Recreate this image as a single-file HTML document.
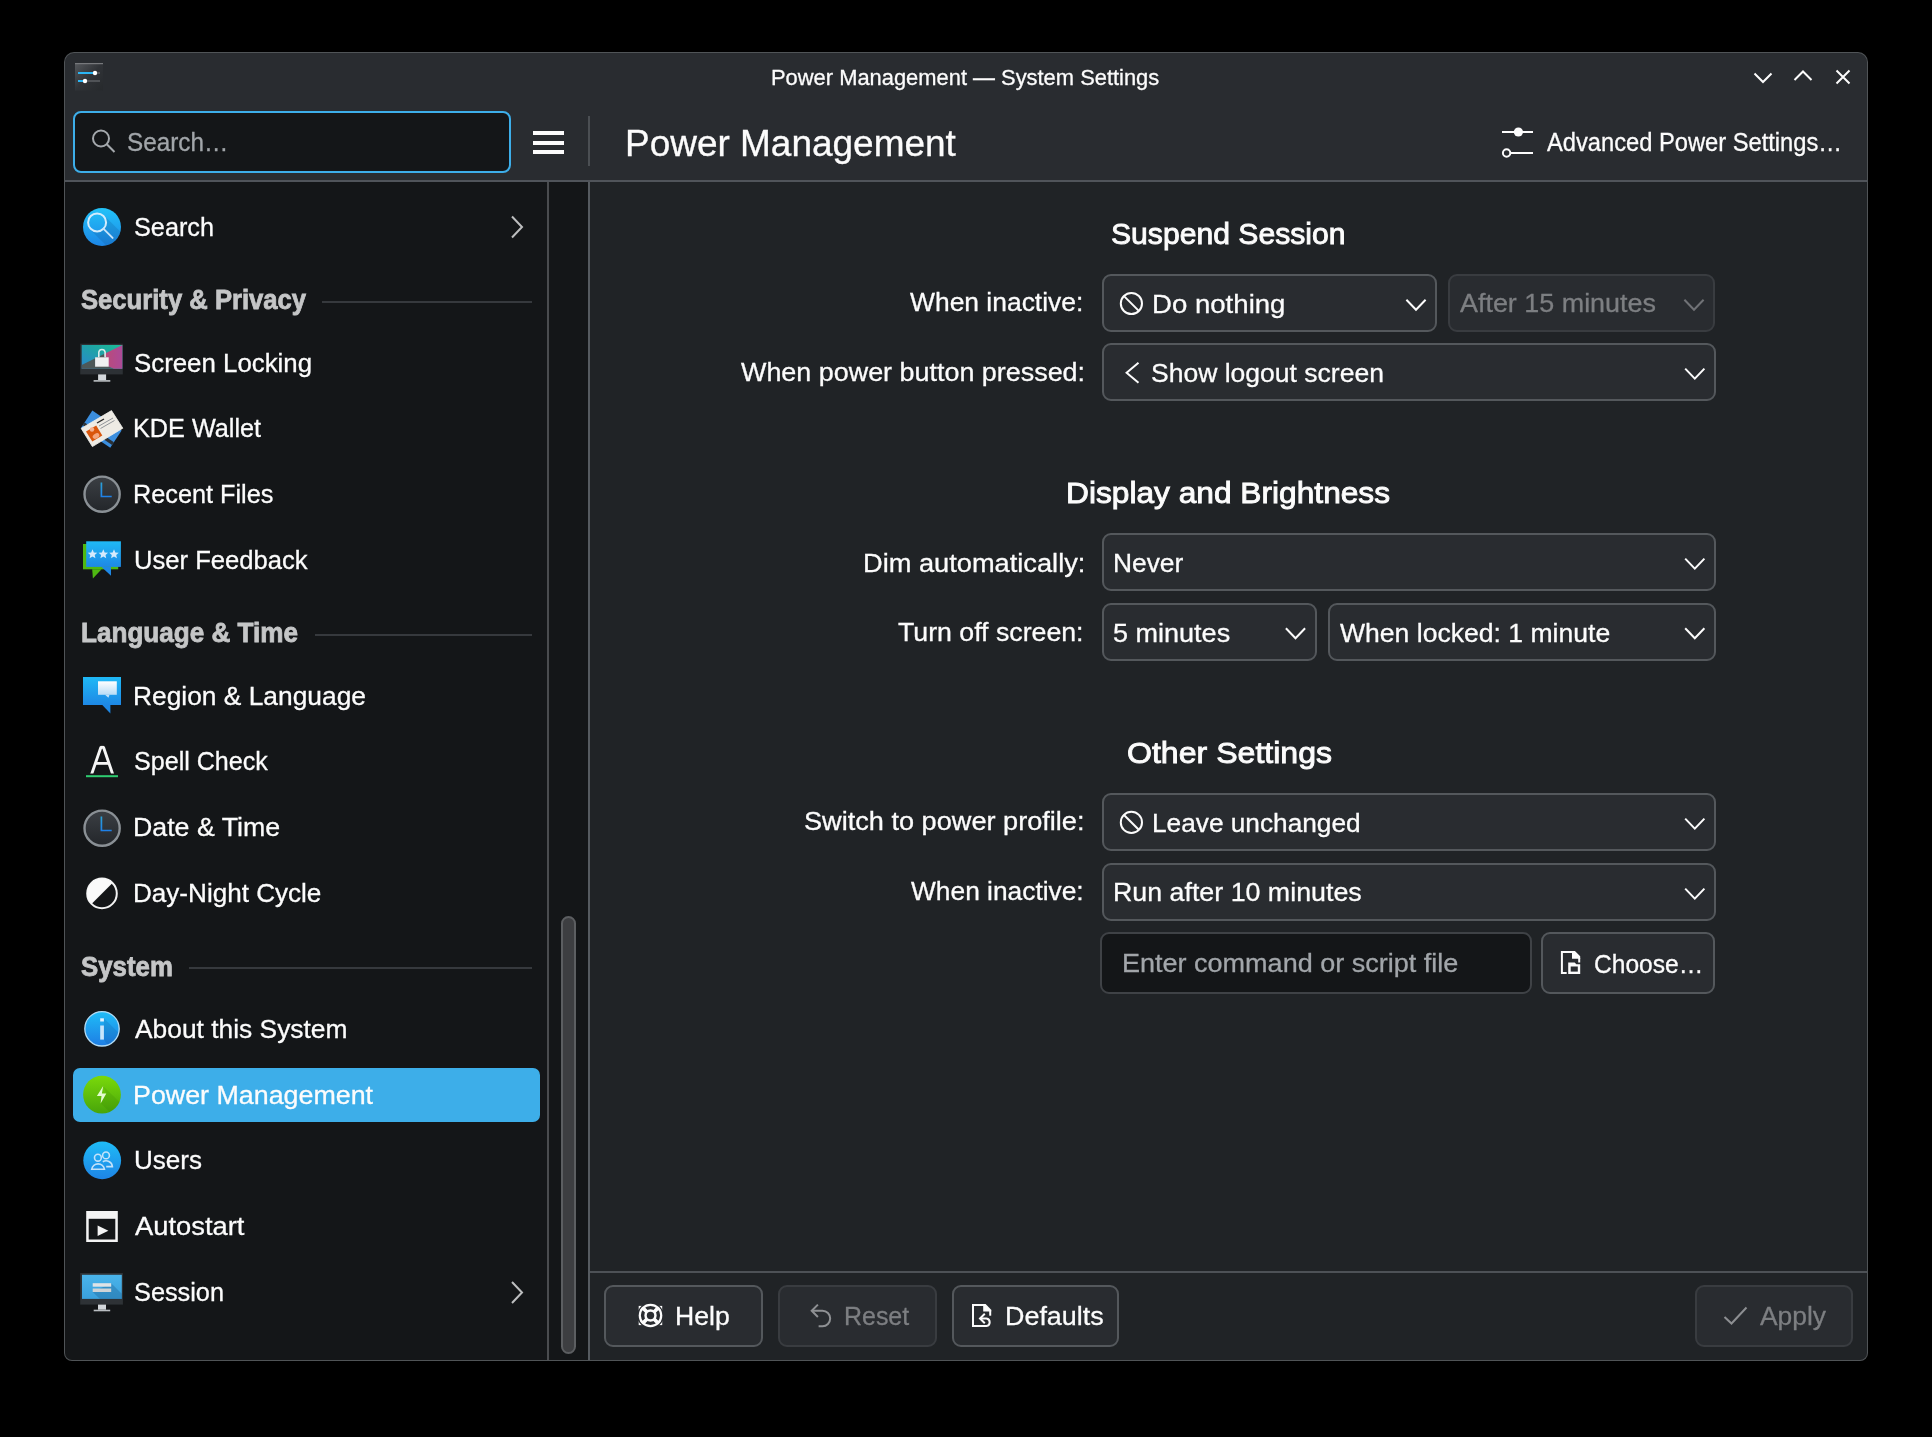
<!DOCTYPE html>
<html><head><meta charset="utf-8"><style>
html,body{margin:0;padding:0;background:#000;width:1932px;height:1437px;overflow:hidden}
body{position:relative;font-family:"Liberation Sans",sans-serif}
body>div,body>svg,body>span{position:absolute}
span{line-height:1;white-space:pre;transform-origin:0 0}
#win{left:64px;top:52px;width:1804px;height:1309px;background:#505457;border-radius:10px 10px 8px 8px}
</style></head><body>
<div id="win"></div>
<div style="left:65px;top:53px;width:1802px;height:127px;background:#292c30;border-radius:9px 9px 0 0"></div>
<div style="left:65px;top:180px;width:1802px;height:2px;background:#50545a;"></div>
<div style="left:65px;top:182px;width:482px;height:1178px;background:#141618;border-bottom-left-radius:7px"></div>
<div style="left:547px;top:182px;width:2px;height:1178px;background:#4a4c4f;"></div>
<div style="left:549px;top:182px;width:39px;height:1178px;background:#141618;"></div>
<div style="left:588px;top:182px;width:2px;height:1178px;background:#565b60;"></div>
<div style="left:590px;top:182px;width:1277px;height:1178px;background:#202326;border-bottom-right-radius:7px"></div>
<div style="left:588px;top:116px;width:2px;height:50px;background:#4b4f53;"></div>
<div style="left:590px;top:1271px;width:1277px;height:2px;background:#4d5156;"></div>
<svg style="left:74px;top:62px" width="30" height="30" viewBox="74 62 30 30">
<defs><linearGradient id="ag" x1="0" y1="0" x2="1" y2="1"><stop offset="0" stop-color="#56595d"/><stop offset="0.5" stop-color="#303337"/><stop offset="1" stop-color="#26292c"/></linearGradient></defs>
<rect x="75" y="63" width="28" height="27.5" fill="url(#ag)"/>
<rect x="75" y="63" width="28" height="1.2" fill="#77797c"/>
<rect x="78" y="72" width="22" height="2" fill="#505357"/>
<rect x="78" y="72" width="16" height="2" fill="#2bb5f3"/>
<circle cx="95" cy="73" r="2.2" fill="#fff"/>
<rect x="78" y="80" width="22" height="2" fill="#505357"/>
<rect x="78" y="80" width="7" height="2" fill="#2bb5f3"/>
<circle cx="85" cy="81" r="2.2" fill="#fff"/>
</svg>
<svg style="left:1748px;top:62px" width="110" height="30" viewBox="1748 62 110 30">
<polyline points="1754.5,73.5 1763,82 1771.5,73.5" fill="none" stroke="#fcfcfc" stroke-width="2"/>
<polyline points="1794.5,80 1803,71.5 1811.5,80" fill="none" stroke="#fcfcfc" stroke-width="2"/>
<path d="M1836.5 70.5 L1849.5 83.5 M1849.5 70.5 L1836.5 83.5" fill="none" stroke="#fcfcfc" stroke-width="2"/>
</svg>
<div style="left:73px;top:111px;width:438px;height:62px;background:#141618;border:2px solid #3daee9;border-radius:8px;box-sizing:border-box;"></div>
<svg style="left:88px;top:126px" width="32" height="32" viewBox="88 126 32 32">
<circle cx="101" cy="138.5" r="8" fill="none" stroke="#a4a8ac" stroke-width="2"/>
<line x1="106.8" y1="144.3" x2="114.5" y2="152" stroke="#a4a8ac" stroke-width="2"/>
</svg>
<div style="left:533px;top:131px;width:31px;height:4px;background:#fcfcfc;"></div>
<div style="left:533px;top:140.5px;width:31px;height:4.0px;background:#fcfcfc;"></div>
<div style="left:533px;top:150px;width:31px;height:4px;background:#fcfcfc;"></div>
<svg style="left:1498px;top:124px" width="40" height="36" viewBox="1498 124 40 36">
<line x1="1502" y1="132" x2="1533" y2="132" stroke="#fcfcfc" stroke-width="2"/>
<circle cx="1518.4" cy="132" r="4.6" fill="#fcfcfc"/>
<line x1="1511" y1="153" x2="1533" y2="153" stroke="#fcfcfc" stroke-width="2"/>
<circle cx="1506.6" cy="153" r="3.7" fill="none" stroke="#fcfcfc" stroke-width="2"/>
</svg>
<div style="left:322px;top:301px;width:210px;height:2px;background:#36393d;"></div>
<div style="left:315px;top:634px;width:217px;height:2px;background:#36393d;"></div>
<div style="left:189px;top:967px;width:343px;height:2px;background:#36393d;"></div>
<svg style="left:505px;top:211px" width="26" height="32" viewBox="505 211 26 32"><polyline points="512,216.5 522,227 512,237.5" fill="none" stroke="#bdbebf" stroke-width="2"/></svg>
<svg style="left:505px;top:1276px" width="26" height="32" viewBox="505 1276 26 32"><polyline points="512,1282.0 522,1292.5 512,1303.0" fill="none" stroke="#bdbebf" stroke-width="2"/></svg>
<div style="left:73px;top:1068px;width:467px;height:54px;background:#3daee9;border-radius:7px"></div>
<div style="left:561px;top:916px;width:15px;height:438px;background:#3d3e41;border:2px solid #5c5e61;border-radius:7.5px;box-sizing:border-box;"></div>
<svg style="left:80px;top:205px" width="44" height="44" viewBox="80 205 44 44">
<defs><linearGradient id="sg" x1="0" y1="0" x2="0" y2="1"><stop offset="0" stop-color="#22c3f8"/><stop offset="1" stop-color="#1d86e6"/></linearGradient></defs>
<circle cx="102" cy="227" r="19" fill="url(#sg)"/>
<clipPath id="sclip"><circle cx="102" cy="227" r="19"/></clipPath>
<mask id="smask"><rect x="78" y="203" width="48" height="48" fill="#fff"/><circle cx="97.1" cy="222.4" r="9" fill="#000"/></mask>
<g clip-path="url(#sclip)"><polygon mask="url(#smask)" points="104.1,215.4 134.1,245.4 120.1,259.4 90.1,229.4" fill="#0a3a70" opacity="0.16"/></g>
<circle cx="97.1" cy="222.4" r="9" fill="none" stroke="#d4ecfc" stroke-width="2"/>
<line x1="103.6" y1="228.9" x2="112.6" y2="237.9" stroke="#c8e4fa" stroke-width="1.9" stroke-linecap="round"/>
</svg>
<svg style="left:78px;top:342px" width="48" height="42" viewBox="78 342 48 42">
<defs><linearGradient id="lg1" x1="0" y1="1" x2="1" y2="0"><stop offset="0" stop-color="#2a86d0"/><stop offset="0.6" stop-color="#1ea5a4"/><stop offset="1" stop-color="#1bbf95"/></linearGradient>
<linearGradient id="lg2" x1="0" y1="0" x2="1" y2="0"><stop offset="0" stop-color="#bb4a77"/><stop offset="1" stop-color="#ac4a98"/></linearGradient></defs>
<rect x="80.2" y="343.7" width="42.6" height="30.7" fill="#2d3135"/>
<rect x="81.7" y="345" width="40.6" height="23.8" fill="url(#lg1)"/>
<polygon points="81.7,365.1 104,354 108.7,366.5 113.9,368.8 81.7,368.8" fill="#4d5859"/>
<polygon points="122.3,345 104,354 108.7,366.5 113.9,368.8 122.3,368.8" fill="url(#lg2)"/>
<rect x="98.1" y="374.4" width="8" height="5.7" fill="#d3d7db"/>
<rect x="93.6" y="380.1" width="16.7" height="1.6" fill="#bcc0c4"/>
<path d="M98.8 357.3 V352.2 A3.2 3.3 0 0 1 105.1 352.2 V357.3" fill="none" stroke="#d9eceb" stroke-width="1.6"/>
<rect x="95.1" y="357.3" width="13.6" height="9.4" fill="#eff0f1"/>
</svg>
<svg style="left:78px;top:406px" width="48" height="44" viewBox="78 406 48 44">
<polygon points="92.35,410.6 121.6,430.4 110.25,447.8 81,428" fill="#3b8ede"/>
<polygon points="84.63,422.4 113.9,442.2 112.1,445 82.8,425.2" fill="#2b3035"/>
<polygon points="81.2,428.4 111.5,410.6 122.8,428.2 92.4,446.6" fill="#eeebe4" stroke="#f4f2ee" stroke-width="0.8" stroke-linejoin="round"/>
<polygon points="86,431.5 96.2,425.4 102.3,435.5 92.3,441.5" fill="#d9560c"/>
<circle cx="92" cy="429.5" r="2.2" fill="#f4b08e"/>
<ellipse cx="96" cy="436" rx="3.6" ry="2.4" transform="rotate(-31 96 436)" fill="#f4a67e"/>
<line x1="97" y1="423" x2="104" y2="419" stroke="#2a2a2a" stroke-width="1.4"/>
<line x1="99" y1="426" x2="113" y2="418" stroke="#7a7f85" stroke-width="0.8"/>
<line x1="100.5" y1="428.5" x2="114.5" y2="420.5" stroke="#7a7f85" stroke-width="0.8"/>
</svg>
<svg style="left:80px;top:472px" width="44" height="44" viewBox="80 472 44 44">
<defs><linearGradient id="cg494" x1="0" y1="0" x2="0" y2="1"><stop offset="0" stop-color="#3b3f44"/><stop offset="1" stop-color="#23262a"/></linearGradient></defs>
<circle cx="102.1" cy="494.2" r="17.6" fill="url(#cg494)" stroke="#8a9095" stroke-width="2.4"/>
<defs><linearGradient id="hg494" gradientUnits="userSpaceOnUse" x1="0" y1="482.2" x2="0" y2="497.2"><stop offset="0" stop-color="#2ca3d6"/><stop offset="1" stop-color="#1e7fe8"/></linearGradient></defs>
<polyline points="101.4,482.59999999999997 101.4,496.5 111.7,496.5" fill="none" stroke="url(#hg494)" stroke-width="1.7"/>
</svg>
<svg style="left:80px;top:806px" width="44" height="44" viewBox="80 806 44 44">
<defs><linearGradient id="cg828" x1="0" y1="0" x2="0" y2="1"><stop offset="0" stop-color="#3b3f44"/><stop offset="1" stop-color="#23262a"/></linearGradient></defs>
<circle cx="102.1" cy="828.2" r="17.6" fill="url(#cg828)" stroke="#8a9095" stroke-width="2.4"/>
<defs><linearGradient id="hg828" gradientUnits="userSpaceOnUse" x1="0" y1="816.2" x2="0" y2="831.2"><stop offset="0" stop-color="#2ca3d6"/><stop offset="1" stop-color="#1e7fe8"/></linearGradient></defs>
<polyline points="101.4,816.6 101.4,830.5 111.7,830.5" fill="none" stroke="url(#hg828)" stroke-width="1.7"/>
</svg>
<svg style="left:80px;top:538px" width="46" height="44" viewBox="80 538 46 44">
<defs><linearGradient id="fg" x1="0" y1="0" x2="0" y2="1"><stop offset="0" stop-color="#1fb9f6"/><stop offset="1" stop-color="#1e88e5"/></linearGradient></defs>
<rect x="83" y="544" width="35.2" height="25.3" fill="#4fb812"/>
<polygon points="92.2,569.3 92.9,578.4 101.6,569.3" fill="#4fb812"/>
<rect x="86.2" y="541.3" width="34.7" height="25.6" fill="url(#fg)"/>
<polygon points="101.6,566.9 111,575.7 111,566.9" fill="#1e88e5"/>
<g fill="#d6eafc"><polygon points="92.50,549.30 93.85,552.44 97.26,552.75 94.69,555.01 95.44,558.35 92.50,556.60 89.56,558.35 90.31,555.01 87.74,552.75 91.15,552.44"/><polygon points="103.30,549.30 104.65,552.44 108.06,552.75 105.49,555.01 106.24,558.35 103.30,556.60 100.36,558.35 101.11,555.01 98.54,552.75 101.95,552.44"/><polygon points="114.00,549.30 115.35,552.44 118.76,552.75 116.19,555.01 116.94,558.35 114.00,556.60 111.06,558.35 111.81,555.01 109.24,552.75 112.65,552.44"/></g>
</svg>
<svg style="left:80px;top:674px" width="44" height="42" viewBox="80 674 44 42">
<defs><linearGradient id="rg" x1="0" y1="0" x2="0" y2="1"><stop offset="0" stop-color="#1fb9f6"/><stop offset="1" stop-color="#1e88e5"/></linearGradient>
<linearGradient id="rw" x1="0" y1="0" x2="0" y2="1"><stop offset="0" stop-color="#ffffff"/><stop offset="1" stop-color="#b8dcf6"/></linearGradient></defs>
<rect x="83" y="677" width="38" height="28" fill="url(#rg)"/>
<polygon points="102.3,704.9 110.4,713.6 110.4,704.9" fill="#1e88e5"/>
<rect x="98" y="681.3" width="18.8" height="13.5" fill="url(#rw)"/>
<polygon points="105,694.8 108.4,697.8 109.5,694.8" fill="#c4e2f8"/>
</svg>
<svg style="left:84px;top:742px" width="38" height="38" viewBox="84 742 38 38">
<clipPath id="aclip"><rect x="84" y="745.6" width="36" height="27.8"/></clipPath><polyline clip-path="url(#aclip)" points="91,776 100.9,747.3 103.5,747.3 113.3,776" fill="none" stroke="#f6f6f6" stroke-width="2.9" stroke-linejoin="bevel"/><rect x="95.5" y="762" width="13.4" height="2.8" fill="#f6f6f6"/>
<rect x="86" y="775.2" width="32" height="2" fill="#2ecc71"/>
</svg>
<svg style="left:82px;top:873px" width="42" height="42" viewBox="82 873 42 42">
<circle cx="102" cy="893.4" r="14.8" fill="#141618" stroke="#f2f2f2" stroke-width="2"/>
<path d="M91.5 903.9 A14.8 14.8 0 0 1 112.5 882.9 Z" fill="#fafafa"/>
</svg>
<svg style="left:80px;top:1006px" width="44" height="44" viewBox="80 1006 44 44">
<defs><linearGradient id="ig" x1="0" y1="0" x2="0" y2="1"><stop offset="0" stop-color="#1fbdf7"/><stop offset="1" stop-color="#1e7de4"/></linearGradient></defs>
<circle cx="102" cy="1028.8" r="17.2" fill="url(#ig)" stroke="#b3ddf7" stroke-width="1.3"/>
<clipPath id="iclip"><circle cx="102" cy="1028.8" r="16.5"/></clipPath>
<polygon clip-path="url(#iclip)" points="103.9,1018.3 130,1044 116,1058 103.9,1039.6" fill="#0a3a70" opacity="0.14"/>
<rect x="100.2" y="1018.3" width="3.7" height="3.2" fill="#e2f2ff"/>
<rect x="100.2" y="1025.5" width="3.7" height="14.1" fill="#c9e5fb"/>
</svg>
<svg style="left:80px;top:1072px" width="44" height="44" viewBox="80 1072 44 44">
<defs><linearGradient id="pg" x1="0" y1="0" x2="0" y2="1"><stop offset="0" stop-color="#7ad90b"/><stop offset="1" stop-color="#48a50a"/></linearGradient></defs>
<circle cx="102" cy="1094.7" r="18.9" fill="url(#pg)"/>
<clipPath id="pclip"><circle cx="102" cy="1094.7" r="18.9"/></clipPath>
<polygon clip-path="url(#pclip)" points="103,1086 106.2,1093.4 101,1103.5 125,1127 135,1117" fill="#2a6a00" opacity="0.13"/>
<polygon points="103.2,1086 96.9,1096 101.5,1096 100.6,1103.6 106.3,1093.4 101.9,1093.4" fill="#e3fbd0"/>
</svg>
<svg style="left:80px;top:1138px" width="44" height="44" viewBox="80 1138 44 44">
<defs><linearGradient id="ug" x1="0" y1="0" x2="0" y2="1"><stop offset="0" stop-color="#1fbcf7"/><stop offset="1" stop-color="#1e84e5"/></linearGradient></defs>
<circle cx="102.2" cy="1160.4" r="18.9" fill="url(#ug)"/>
<g fill="none" stroke="#c2e2fa" stroke-width="1.6">
<circle cx="97.9" cy="1157.7" r="3.4"/>
<path d="M91.7 1169.3 A6.5 6.6 0 0 1 104.5 1169.3 Z"/>
<circle cx="106" cy="1155.4" r="3.4"/>
<path d="M102.8 1161.8 A6.3 6.3 0 0 1 112.4 1166.6 H106.2"/>
</g>
</svg>
<svg style="left:84px;top:1208px" width="38" height="38" viewBox="84 1208 38 38">
<rect x="86.2" y="1211" width="31.6" height="31" fill="#f4f4f4"/>
<rect x="88.7" y="1218.8" width="26.6" height="20.7" fill="#141618"/>
<polygon points="97.6,1225.6 108.4,1230.8 97.6,1236" fill="#f4f4f4"/>
</svg>
<svg style="left:78px;top:1271px" width="48" height="42" viewBox="78 1271 48 42">
<defs><linearGradient id="mg" x1="0" y1="0" x2="0" y2="1"><stop offset="0" stop-color="#4ab4ea"/><stop offset="1" stop-color="#3aa0dc"/></linearGradient></defs>
<rect x="80.2" y="1273" width="42.7" height="31.6" fill="#2e3236"/>
<rect x="82" y="1274.8" width="39.8" height="24.1" fill="url(#mg)"/>
<polygon points="111.2,1283.2 121.8,1293.8 121.8,1298.9 100,1298.9 92.7,1292" fill="#1d5f8f" opacity="0.35"/>
<rect x="92.7" y="1283.2" width="18.5" height="3.5" fill="#dfe3e6"/>
<rect x="92.7" y="1288.5" width="18.5" height="3.5" fill="#cfd3d6"/>
<rect x="98" y="1304.6" width="8" height="5.1" fill="#d2d6da"/>
<rect x="93.7" y="1309.7" width="16.5" height="1.6" fill="#b9bdc1"/>
</svg>
<div style="left:1102px;top:274px;width:335px;height:58px;background:#292c30;border:2px solid #54585c;border-radius:9px;box-sizing:border-box;"></div>
<div style="left:1448px;top:274px;width:267px;height:58px;background:#292c30;border:2px solid #393c40;border-radius:9px;box-sizing:border-box;"></div>
<div style="left:1102px;top:343px;width:614px;height:58px;background:#292c30;border:2px solid #54585c;border-radius:9px;box-sizing:border-box;"></div>
<div style="left:1102px;top:533px;width:614px;height:58px;background:#292c30;border:2px solid #54585c;border-radius:9px;box-sizing:border-box;"></div>
<div style="left:1102px;top:603px;width:215px;height:58px;background:#292c30;border:2px solid #54585c;border-radius:9px;box-sizing:border-box;"></div>
<div style="left:1328px;top:603px;width:388px;height:58px;background:#292c30;border:2px solid #54585c;border-radius:9px;box-sizing:border-box;"></div>
<div style="left:1102px;top:793px;width:614px;height:58px;background:#292c30;border:2px solid #54585c;border-radius:9px;box-sizing:border-box;"></div>
<div style="left:1102px;top:863px;width:614px;height:58px;background:#292c30;border:2px solid #54585c;border-radius:9px;box-sizing:border-box;"></div>
<div style="left:1100px;top:932px;width:432px;height:62px;background:#141618;border:2px solid #3f4246;border-radius:9px;box-sizing:border-box;"></div>
<div style="left:1541px;top:932px;width:174px;height:62px;background:#292c30;border:2px solid #54585c;border-radius:9px;box-sizing:border-box;"></div>
<svg style="left:1402px;top:293px" width="28" height="22" viewBox="1402 293 28 22"><polyline points="1406.4,299.8 1416,309.8 1425.6,299.8" fill="none" stroke="#fcfcfc" stroke-width="2"/></svg>
<svg style="left:1680px;top:293px" width="28" height="22" viewBox="1680 293 28 22"><polyline points="1684.4,299.8 1694,309.8 1703.6,299.8" fill="none" stroke="#707276" stroke-width="2"/></svg>
<svg style="left:1680px;top:362px" width="28" height="22" viewBox="1680 362 28 22"><polyline points="1685.2,368.6 1694.8,378.6 1704.3999999999999,368.6" fill="none" stroke="#fcfcfc" stroke-width="2"/></svg>
<svg style="left:1680px;top:552px" width="28" height="22" viewBox="1680 552 28 22"><polyline points="1685.2,558.6 1694.8,568.6 1704.3999999999999,558.6" fill="none" stroke="#fcfcfc" stroke-width="2"/></svg>
<svg style="left:1281px;top:622px" width="28" height="22" viewBox="1281 622 28 22"><polyline points="1285.9,628.2 1295.5,638.2 1305.1,628.2" fill="none" stroke="#fcfcfc" stroke-width="2"/></svg>
<svg style="left:1680px;top:622px" width="28" height="22" viewBox="1680 622 28 22"><polyline points="1685.2,628.2 1694.8,638.2 1704.3999999999999,628.2" fill="none" stroke="#fcfcfc" stroke-width="2"/></svg>
<svg style="left:1680px;top:812px" width="28" height="22" viewBox="1680 812 28 22"><polyline points="1685.2,818.6 1694.8,828.6 1704.3999999999999,818.6" fill="none" stroke="#fcfcfc" stroke-width="2"/></svg>
<svg style="left:1680px;top:882px" width="28" height="22" viewBox="1680 882 28 22"><polyline points="1685.2,888.6 1694.8,898.6 1704.3999999999999,888.6" fill="none" stroke="#fcfcfc" stroke-width="2"/></svg>
<svg style="left:1116px;top:288px" width="32" height="30" viewBox="1116 288 32 30">
<circle cx="1131.4" cy="303.5" r="10.6" fill="none" stroke="#fcfcfc" stroke-width="2"/>
<line x1="1124" y1="296.1" x2="1138.8" y2="310.9" stroke="#fcfcfc" stroke-width="2"/>
</svg>
<svg style="left:1116px;top:807px" width="32" height="30" viewBox="1116 807 32 30">
<circle cx="1131.4" cy="822.4" r="10.6" fill="none" stroke="#fcfcfc" stroke-width="2"/>
<line x1="1124" y1="815.0" x2="1138.8" y2="829.8" stroke="#fcfcfc" stroke-width="2"/>
</svg>
<svg style="left:1118px;top:356px" width="28" height="34" viewBox="1118 356 28 34"><polyline points="1138.5,362.8 1126.6,372.8 1138.5,382.8" fill="none" stroke="#fcfcfc" stroke-width="2"/></svg>
<svg style="left:1556px;top:946px" width="30" height="32" viewBox="1556 946 30 32">
<path d="M1566.7 973 H1561.9 V951.9 H1574.5" fill="none" stroke="#fcfcfc" stroke-width="2"/>
<polygon points="1572,950.9 1574.9,950.9 1580.2,956.3 1580.2,958.7 1572,958.7" fill="#fcfcfc"/>
<rect x="1578.2" y="958" width="2" height="4.5" fill="#fcfcfc"/>
<polygon points="1568.2,962.5 1574.6,962.5 1576.4,964.3 1580.2,964.3 1580.2,974 1568.2,974" fill="#fcfcfc"/>
<rect x="1570.7" y="966.5" width="7.1" height="5.1" fill="#292c30"/>
</svg>
<div style="left:604px;top:1285px;width:159px;height:62px;background:#292c30;border:2px solid #54585c;border-radius:9px;box-sizing:border-box;"></div>
<div style="left:778px;top:1285px;width:159px;height:62px;background:#292c30;border:2px solid #393c40;border-radius:9px;box-sizing:border-box;"></div>
<div style="left:952px;top:1285px;width:167px;height:62px;background:#292c30;border:2px solid #54585c;border-radius:9px;box-sizing:border-box;"></div>
<div style="left:1695px;top:1285px;width:158px;height:62px;background:#292c30;border:2px solid #393c40;border-radius:9px;box-sizing:border-box;"></div>
<svg style="left:634px;top:1299px" width="34" height="34" viewBox="634 1299 34 34">
<rect x="638.7" y="1305.9" width="4.6" height="4.4" fill="#fcfcfc"/>
<rect x="657.6" y="1305.9" width="4.6" height="4.4" fill="#fcfcfc"/>
<rect x="638.7" y="1320.7" width="4.6" height="4.4" fill="#fcfcfc"/>
<rect x="657.6" y="1320.7" width="4.6" height="4.4" fill="#fcfcfc"/>
<circle cx="650.5" cy="1315.5" r="12.5" fill="none" stroke="#292c30" stroke-width="1.4"/>
<circle cx="650.5" cy="1315.5" r="11.8" fill="#fcfcfc"/>
<circle cx="650.5" cy="1315.5" r="7.9" fill="none" stroke="#292c30" stroke-width="3.4"/>
<g stroke="#fcfcfc" stroke-width="3.8">
<line x1="643" y1="1308" x2="658" y2="1323"/>
<line x1="658" y1="1308" x2="643" y2="1323"/>
</g>
<circle cx="650.5" cy="1315.5" r="3.7" fill="#292c30"/>
</svg>
<svg style="left:806px;top:1299px" width="30" height="32" viewBox="806 1299 30 32">
<path d="M812.2 1310.8 H822.5 A7.7 7.7 0 0 1 822.5 1326.2 H818.6" fill="none" stroke="#8f9194" stroke-width="2"/>
<polyline points="817.9,1304.6 811.7,1310.8 817.9,1317" fill="none" stroke="#8f9194" stroke-width="2"/>
</svg>
<svg style="left:966px;top:1299px" width="32" height="32" viewBox="966 1299 32 32">
<path d="M985 1305 H973 V1326 H986.5 A3.8 3.8 0 0 0 986.5 1318.5 H980" fill="none" stroke="#fcfcfc" stroke-width="2"/>
<polygon points="983.2,1304 985.6,1304 991.2,1309.8 991.2,1311.5 983.2,1311.5" fill="#fcfcfc"/>
<rect x="989.2" y="1310" width="2" height="5.7" fill="#fcfcfc"/>
<polyline points="984.8,1313.8 980,1318.5 984.8,1323.2" fill="none" stroke="#fcfcfc" stroke-width="2"/>
</svg>
<svg style="left:1720px;top:1303px" width="32" height="26" viewBox="1720 1303 32 26">
<polyline points="1724.5,1317 1731.5,1323.5 1746.5,1307.5" fill="none" stroke="#8d8f92" stroke-width="2"/>
</svg>
<span style="left:771.46px;top:66.89px;font-size:22.6px;font-weight:400;-webkit-text-stroke:0.3px currentColor;color:#fcfcfc;transform:scaleX(0.9692)">Power Management — System Settings</span>
<span style="left:126.55px;top:128.69px;font-size:26.5px;font-weight:400;-webkit-text-stroke:0.3px currentColor;color:#a2a6aa;transform:scaleX(0.9173)">Search…</span>
<span style="left:624.96px;top:125.69px;font-size:36.6px;font-weight:400;-webkit-text-stroke:0.3px currentColor;color:#fcfcfc;transform:scaleX(1.0108)">Power Management</span>
<span style="left:1547.17px;top:128.89px;font-size:26.5px;font-weight:400;-webkit-text-stroke:0.3px currentColor;color:#fcfcfc;transform:scaleX(0.8941)">Advanced Power Settings…</span>
<span style="left:134.30px;top:214.29px;font-size:26.5px;font-weight:400;-webkit-text-stroke:0.3px currentColor;color:#fcfcfc;transform:scaleX(0.9526)">Search</span>
<span style="left:80.96px;top:286.11px;font-size:27.3px;font-weight:700;-webkit-text-stroke:0.8px currentColor;color:#c5c6c7;transform:scaleX(0.9390)">Security &amp; Privacy</span>
<span style="left:134.17px;top:349.69px;font-size:26.5px;font-weight:400;-webkit-text-stroke:0.3px currentColor;color:#fcfcfc;transform:scaleX(0.9748)">Screen Locking</span>
<span style="left:133.49px;top:415.49px;font-size:26.5px;font-weight:400;-webkit-text-stroke:0.3px currentColor;color:#fcfcfc;transform:scaleX(0.9526)">KDE Wallet</span>
<span style="left:133.49px;top:481.29px;font-size:26.5px;font-weight:400;-webkit-text-stroke:0.3px currentColor;color:#fcfcfc;transform:scaleX(0.9531)">Recent Files</span>
<span style="left:133.82px;top:547.09px;font-size:26.5px;font-weight:400;-webkit-text-stroke:0.3px currentColor;color:#fcfcfc;transform:scaleX(0.9663)">User Feedback</span>
<span style="left:81.13px;top:619.41px;font-size:27.3px;font-weight:700;-webkit-text-stroke:0.8px currentColor;color:#c5c6c7;transform:scaleX(0.9558)">Language &amp; Time</span>
<span style="left:133.40px;top:682.59px;font-size:26.5px;font-weight:400;-webkit-text-stroke:0.3px currentColor;color:#fcfcfc;transform:scaleX(0.9943)">Region &amp; Language</span>
<span style="left:134.21px;top:748.39px;font-size:26.5px;font-weight:400;-webkit-text-stroke:0.3px currentColor;color:#fcfcfc;transform:scaleX(0.9466)">Spell Check</span>
<span style="left:133.37px;top:814.19px;font-size:26.5px;font-weight:400;-webkit-text-stroke:0.3px currentColor;color:#fcfcfc;transform:scaleX(1.0085)">Date &amp; Time</span>
<span style="left:133.42px;top:879.99px;font-size:26.5px;font-weight:400;-webkit-text-stroke:0.3px currentColor;color:#fcfcfc;transform:scaleX(0.9839)">Day-Night Cycle</span>
<span style="left:80.95px;top:952.71px;font-size:27.3px;font-weight:700;-webkit-text-stroke:0.8px currentColor;color:#c5c6c7;transform:scaleX(0.9457)">System</span>
<span style="left:135.35px;top:1015.89px;font-size:26.5px;font-weight:400;-webkit-text-stroke:0.3px currentColor;color:#fcfcfc;transform:scaleX(0.9947)">About this System</span>
<span style="left:133.36px;top:1081.69px;font-size:26.5px;font-weight:400;-webkit-text-stroke:0.3px currentColor;color:#fcfcfc;transform:scaleX(1.0122)">Power Management</span>
<span style="left:133.80px;top:1147.49px;font-size:26.5px;font-weight:400;-webkit-text-stroke:0.3px currentColor;color:#fcfcfc;transform:scaleX(0.9813)">Users</span>
<span style="left:135.35px;top:1213.29px;font-size:26.5px;font-weight:400;-webkit-text-stroke:0.3px currentColor;color:#fcfcfc;transform:scaleX(1.0312)">Autostart</span>
<span style="left:134.20px;top:1279.09px;font-size:26.5px;font-weight:400;-webkit-text-stroke:0.3px currentColor;color:#fcfcfc;transform:scaleX(0.9548)">Session</span>
<span style="left:1110.97px;top:218.71px;font-size:30.2px;font-weight:400;-webkit-text-stroke:0.9px currentColor;color:#fcfcfc;transform:scaleX(0.9983)">Suspend Session</span>
<span style="left:909.86px;top:289.39px;font-size:26.5px;font-weight:400;-webkit-text-stroke:0.3px currentColor;color:#fcfcfc;transform:scaleX(0.9971)">When inactive:</span>
<span style="left:1151.70px;top:290.99px;font-size:26.5px;font-weight:400;-webkit-text-stroke:0.3px currentColor;color:#fcfcfc;transform:scaleX(1.0411)">Do nothing</span>
<span style="left:1459.55px;top:290.49px;font-size:26.5px;font-weight:400;-webkit-text-stroke:0.3px currentColor;color:#7d7f82;transform:scaleX(1.0155)">After 15 minutes</span>
<span style="left:741.45px;top:359.49px;font-size:26.5px;font-weight:400;-webkit-text-stroke:0.3px currentColor;color:#fcfcfc;transform:scaleX(1.0155)">When power button pressed:</span>
<span style="left:1151.44px;top:359.99px;font-size:26.5px;font-weight:400;-webkit-text-stroke:0.3px currentColor;color:#fcfcfc;transform:scaleX(1.0007)">Show logout screen</span>
<span style="left:1066.31px;top:477.91px;font-size:30.2px;font-weight:400;-webkit-text-stroke:0.9px currentColor;color:#fcfcfc;transform:scaleX(1.0496)">Display and Brightness</span>
<span style="left:862.73px;top:549.59px;font-size:26.5px;font-weight:400;-webkit-text-stroke:0.3px currentColor;color:#fcfcfc;transform:scaleX(1.0271)">Dim automatically:</span>
<span style="left:1112.80px;top:549.89px;font-size:26.5px;font-weight:400;-webkit-text-stroke:0.3px currentColor;color:#fcfcfc;transform:scaleX(0.9941)">Never</span>
<span style="left:897.74px;top:619.09px;font-size:26.5px;font-weight:400;-webkit-text-stroke:0.3px currentColor;color:#fcfcfc;transform:scaleX(1.0076)">Turn off screen:</span>
<span style="left:1113.37px;top:620.19px;font-size:26.5px;font-weight:400;-webkit-text-stroke:0.3px currentColor;color:#fcfcfc;transform:scaleX(1.0198)">5 minutes</span>
<span style="left:1339.95px;top:619.99px;font-size:26.5px;font-weight:400;-webkit-text-stroke:0.3px currentColor;color:#fcfcfc;transform:scaleX(1.0022)">When locked: 1 minute</span>
<span style="left:1127.22px;top:737.71px;font-size:30.2px;font-weight:400;-webkit-text-stroke:0.9px currentColor;color:#fcfcfc;transform:scaleX(1.0628)">Other Settings</span>
<span style="left:804.21px;top:808.39px;font-size:26.5px;font-weight:400;-webkit-text-stroke:0.3px currentColor;color:#fcfcfc;transform:scaleX(1.0238)">Switch to power profile:</span>
<span style="left:1151.61px;top:809.79px;font-size:26.5px;font-weight:400;-webkit-text-stroke:0.3px currentColor;color:#fcfcfc;transform:scaleX(0.9899)">Leave unchanged</span>
<span style="left:910.56px;top:878.49px;font-size:26.5px;font-weight:400;-webkit-text-stroke:0.3px currentColor;color:#fcfcfc;transform:scaleX(0.9936)">When inactive:</span>
<span style="left:1112.67px;top:878.89px;font-size:26.5px;font-weight:400;-webkit-text-stroke:0.3px currentColor;color:#fcfcfc;transform:scaleX(1.0109)">Run after 10 minutes</span>
<span style="left:1122.25px;top:949.99px;font-size:26.5px;font-weight:400;-webkit-text-stroke:0.3px currentColor;color:#a2a6aa;transform:scaleX(1.0195)">Enter command or script file</span>
<span style="left:1593.54px;top:950.59px;font-size:26.5px;font-weight:400;-webkit-text-stroke:0.3px currentColor;color:#fcfcfc;transform:scaleX(0.9268)">Choose…</span>
<span style="left:674.88px;top:1303.39px;font-size:26.5px;font-weight:400;-webkit-text-stroke:0.3px currentColor;color:#fcfcfc;transform:scaleX(1.0032)">Help</span>
<span style="left:843.51px;top:1302.99px;font-size:26.5px;font-weight:400;-webkit-text-stroke:0.3px currentColor;color:#7d7f82;transform:scaleX(0.9416)">Reset</span>
<span style="left:1005.46px;top:1302.99px;font-size:26.5px;font-weight:400;-webkit-text-stroke:0.3px currentColor;color:#fcfcfc;transform:scaleX(1.0150)">Defaults</span>
<span style="left:1759.95px;top:1303.29px;font-size:26.5px;font-weight:400;-webkit-text-stroke:0.3px currentColor;color:#7d7f82;transform:scaleX(0.9947)">Apply</span>
</body></html>
